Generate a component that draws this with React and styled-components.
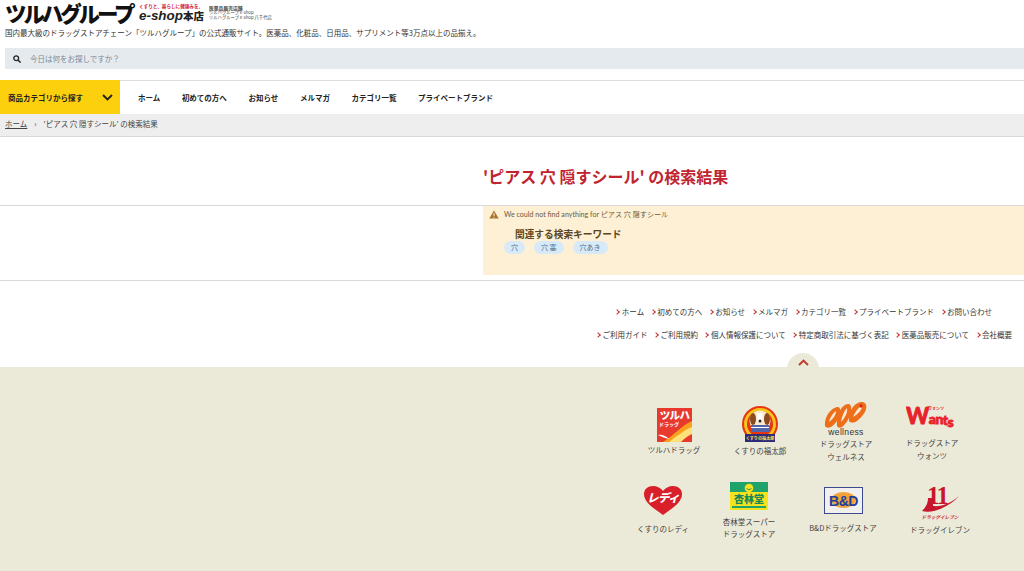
import React from 'react';
import styled, { createGlobalStyle } from 'styled-components';

const GlobalStyle = createGlobalStyle`
  html, body {
    margin: 0;
    padding: 0;
    height: 571px;
    overflow: hidden;
    background: #fff;
    font-family: "Noto Sans CJK JP", "Noto Sans", sans-serif;
    color: #333;
  }
  * { box-sizing: border-box; }
`;

const Header = styled.header`
  height: 48px;
  padding: 1px 5px 0;
`;

const LogoRow = styled.div`
  display: flex;
  align-items: flex-start;
  height: 23px;
`;

const GroupName = styled.div`
  flex: none;
  width: 134px;
  font-size: 21.5px;
  line-height: 23px;
  font-weight: 900;
  color: #111;
  letter-spacing: -3.1px;
  white-space: nowrap;
`;

const ShopName = styled.div`
  flex: none;
  width: 70px;
  display: flex;
  flex-direction: column;
`;

const Catch = styled.span`
  margin-top: 2px;
  font-size: 4.6px;
  line-height: 7px;
  font-weight: 700;
  color: #d4213a;
  white-space: nowrap;
`;

const ShopTitle = styled.span`
  font-size: 10.5px;
  line-height: 12px;
  font-weight: 900;
  color: #222;
  white-space: nowrap;
  em { font-family: "Liberation Sans", sans-serif; font-weight: 700; font-size: 13.4px; }
`;

const License = styled.div`
  flex: none;
  display: flex;
  flex-direction: column;
  padding-top: 4px;
  font-size: 4.3px;
  line-height: 5px;
  color: #444;
  white-space: nowrap;
  b { font-weight: 700; font-size: 4.8px; }
`;

const Tagline = styled.p`
  margin: 3px 0 0;
  font-size: 7.5px;
  line-height: 11px;
  color: #333;
  white-space: nowrap;
`;

const SearchBar = styled.div`
  height: 21px;
  margin: 0 0 11px 5px;
  padding-left: 8px;
  background: #e5eaef;
  display: flex;
  align-items: center;
  gap: 9px;
  font-size: 7.5px;
  color: #7d8790;
`;

const Nav = styled.nav`
  height: 34px;
  border-top: 1px solid #ddd;
  display: flex;
  align-items: stretch;
`;

const CategoryButton = styled.div`
  width: 120px;
  margin-top: -1px;
  background: #fdd00e;
  display: flex;
  align-items: center;
  justify-content: space-between;
  padding: 0 7px 0 8px;
  font-size: 7.5px;
  font-weight: 700;
  color: #222;
`;

const NavList = styled.div`
  display: flex;
  align-items: center;
  gap: 21.6px;
  padding: 0 0 1px 18px;
  font-size: 7.5px;
  font-weight: 700;
  color: #222;
`;

const Breadcrumb = styled.div`
  height: 23px;
  background: #eee;
  border-bottom: 1px solid #d8d8d8;
  padding: 0 0 4px 5px;
  display: flex;
  align-items: center;
  gap: 7px;
  font-size: 7.5px;
  color: #444;
  a { color: #444; text-decoration: underline; }
`;

const TitleBand = styled.section`
  height: 69px;
  padding: 27px 0 0 483px;
  border-bottom: 1px solid #d9d9d9;
`;

const PageTitle = styled.h1`
  margin: 0;
  font-size: 16px;
  line-height: 24px;
  font-weight: 700;
  color: #c0242f;
  white-space: pre;
`;

const ResultBand = styled.section`
  height: 75px;
  padding-left: 483px;
  border-bottom: 1px solid #d9d9d9;
`;

const Notice = styled.div`
  height: 69px;
  background: #fdf0d5;
  padding: 3px 0 0 6px;
`;

const Warning = styled.div`
  display: flex;
  align-items: center;
  gap: 5px;
  font-size: 7.1px;
  line-height: 11px;
  color: #6d5a3a;
  font-family: "Lato", "Noto Sans CJK JP", sans-serif;
`;

const KeywordTitle = styled.div`
  margin: 9px 0 0 26px;
  font-size: 9.7px;
  line-height: 11px;
  font-weight: 700;
  color: #5c4520;
`;

const Chips = styled.div`
  display: flex;
  gap: 9px;
  margin: 1px 0 0 15px;
`;

const Chip = styled.span`
  height: 13px;
  padding: 0 7px;
  border-radius: 7px;
  background: #d8eaf8;
  font-size: 7px;
  line-height: 13px;
  color: #4f6f8a;
`;

const LinkArea = styled.div`
  height: 86px;
  padding: 25px 12px 0 0;
  display: flex;
  flex-direction: column;
  align-items: flex-end;
  gap: 11px;
`;

const LinkRow = styled.div`
  display: flex;
  gap: 6.5px;
  margin-right: ${p => p.$inset || 0}px;
  font-size: 7.5px;
  line-height: 12px;
  color: #333;
`;

const FootLink = styled.span`
  display: flex;
  align-items: center;
  gap: 2.5px;
  white-space: nowrap;
  &::before {
    content: "";
    width: 3px;
    height: 3px;
    border-top: 1.3px solid #c0342f;
    border-right: 1.3px solid #c0342f;
    transform: rotate(45deg);
  }
`;

const Footer = styled.footer`
  position: relative;
  height: 204px;
  background: #ebe9d8;
  padding-top: 35px;
  display: flex;
  flex-direction: column;
  gap: 20px;
`;

const TopButton = styled.div`
  position: absolute;
  top: -14px;
  left: 787px;
  width: 32px;
  height: 16px;
  border-radius: 16px 16px 0 0;
  background: #ebe9d8;
  display: flex;
  align-items: center;
  justify-content: center;
  padding-top: 2px;
`;

const BrandRow = styled.div`
  display: flex;
  align-items: center;
  height: ${p => p.$h}px;
  padding-left: ${p => p.$left}px;
`;

const Brand = styled.div`
  width: ${p => p.$w}px;
  display: flex;
  flex-direction: column;
  align-items: center;
  gap: ${p => p.$gap}px;
`;

const BrandLabel = styled.div`
  font-size: 7.5px;
  line-height: 12.5px;
  color: #444;
  text-align: center;
  white-space: pre-line;
`;

const SearchIcon = () => (
  <svg width="8" height="8" viewBox="0 0 8 8">
    <circle cx="3.2" cy="3.2" r="2.4" fill="none" stroke="#222" strokeWidth="1.3" />
    <path d="M5 5 L7.6 7.6" stroke="#222" strokeWidth="1.5" />
  </svg>
);

const Chevron = ({ color, up }) => (
  <svg width="11" height="7" viewBox="0 0 11 7">
    <path d={up ? 'M1 6 L5.5 1.6 L10 6' : 'M1 1 L5.5 5.4 L10 1'} fill="none" stroke={color} strokeWidth="1.9" />
  </svg>
);

const WarnIcon = () => (
  <svg width="10" height="9" viewBox="0 0 10 9">
    <path d="M5 .5 L9.7 8.6 L.3 8.6 Z" fill="#a8742a" />
    <rect x="4.5" y="3" width="1" height="3" fill="#fdf0d5" />
    <rect x="4.5" y="6.7" width="1" height="1" fill="#fdf0d5" />
  </svg>
);

const TsuruhaLogo = () => (
  <svg width="35" height="34" viewBox="0 0 35 34">
    <rect width="35" height="34" fill="#e8392f" />
    <path d="M6 34 C16 28 24 18 35 13 L35 22 C28 26 24 30 20 34 Z" fill="#f9a11b" />
    <path d="M12 34 C20 28 27 22 35 19 L35 26 C30 28 27 31 24 34 Z" fill="#fde27a" />
    <path d="M1 27 C5 26 9 28 12 31 C8 30 5 29 1 27 Z" fill="#fff" />
    <text x="17.5" y="11" textAnchor="middle" fontSize="10.5" fontWeight="900" fill="#fff" letterSpacing="-.6">ツルハ</text>
    <text x="2" y="18" fontSize="5" fontWeight="700" fill="#fff">ドラッグ</text>
  </svg>
);

const FukutaroLogo = () => (
  <svg width="38" height="37" viewBox="0 0 38 37">
    <circle cx="19" cy="18" r="18" fill="#e8340f" />
    <circle cx="19" cy="18" r="14.5" fill="#e8340f" stroke="#f6c51b" strokeWidth="3" />
    <circle cx="19" cy="15" r="10.5" fill="#fbe9cf" />
    <ellipse cx="12" cy="13" rx="3" ry="6" fill="#8a4a1f" />
    <ellipse cx="26" cy="13" rx="3" ry="6" fill="#8a4a1f" />
    <path d="M16.5 7 h5 v9 h-5 Z" fill="#fff" />
    <circle cx="19" cy="15" r="1.5" fill="#222" />
    <rect x="10" y="19" width="18" height="7" fill="#5566a8" />
    <rect x="10" y="21" width="18" height="1" fill="#fff" />
    <rect x="4" y="28" width="30" height="8" fill="#2f2a78" />
    <text x="19" y="34" textAnchor="middle" fontSize="4.1" fontWeight="700" fill="#f7e25a">くすりの福太郎</text>
  </svg>
);

const WellnessLogo = () => (
  <svg width="44" height="35" viewBox="0 0 44 35">
    <path d="M1 25 C0 15 8 6 14 6 C19 7 16 20 7 26 C4 27 2 27 1 25 Z" fill="#ee6f1a" />
    <path d="M13 25 C12 14 18 2 25 3 C30 5 26 20 18 26 C16 27 14 27 13 25 Z" fill="#ee6f1a" />
    <path d="M25 20 C24 10 31 0 39 1 C45 3 43 12 33 20 C30 22 26 22 25 20 Z" fill="#ee6f1a" />
    <path d="M5 21 C6 16 9 12 12 10 C12 14 9 18 5 21 Z" fill="#fde9d4" />
    <path d="M17 21 C18 15 20 10 23 7 C24 11 21 17 17 21 Z" fill="#fde9d4" />
    <path d="M29 16 C31 11 34 7 38 4 C39 8 34 13 29 16 Z" fill="#fde9d4" />
    <circle cx="37" cy="5" r="1.7" fill="#d8261c" />
    <text x="22" y="34" textAnchor="middle" fontFamily="Liberation Sans" fontSize="8.6" fill="#333" letterSpacing=".3">wellness</text>
  </svg>
);

const WantsLogo = () => (
  <svg width="53" height="27" viewBox="0 0 53 27">
    <text x="0" y="22" fontFamily="Lato" fontWeight="900" fontSize="22" fill="#e8222a" stroke="#e8222a" strokeWidth=".8" letterSpacing="-.5">W<tspan fontSize="14" dy="0">an</tspan><tspan fontSize="14" dy="1">t</tspan><tspan fontSize="14" dy="2">s</tspan></text>
    <text x="22" y="8" fontSize="4" fontWeight="700" fill="#e8222a">ウォンツ</text>
  </svg>
);

const LadyLogo = () => (
  <svg width="38" height="29" viewBox="0 0 38 29">
    <path d="M19 29 C11 23 0 17 0 8 C0 3 4 0 9 0 C13 0 17 2 19 5 C21 2 25 0 29 0 C34 0 38 3 38 8 C38 17 27 23 19 29 Z" fill="#d81f2a" />
    <text x="19" y="16" textAnchor="middle" fontSize="11.5" fontWeight="900" fontStyle="italic" fill="#fff" letterSpacing="-.5">レディ</text>
  </svg>
);

const KyorindoLogo = () => (
  <svg width="38" height="28" viewBox="0 0 38 28">
    <rect width="38" height="28" fill="#f4e21f" />
    <rect width="38" height="10" fill="#1fa36a" />
    <circle cx="19" cy="6" r="4.3" fill="#f4e21f" />
    <path d="M16.5 6.5 Q19 9 21.5 6.5" fill="none" stroke="#1b7a50" strokeWidth=".8" />
    <text x="19" y="21" textAnchor="middle" fontSize="10" fontWeight="900" fill="#158a56">杏林堂</text>
    <rect x="2" y="24" width="34" height="2" fill="#1fa36a" />
  </svg>
);

const BDLogo = () => (
  <svg width="39" height="27" viewBox="0 0 39 27">
    <rect x=".5" y=".5" width="38" height="26" fill="#f1f0ee" stroke="#3c4a92" />
    <ellipse cx="19.5" cy="13" rx="12" ry="8" fill="#f3a33a" />
    <text x="19.5" y="19" textAnchor="middle" fontFamily="Liberation Sans" fontWeight="700" fontSize="14" fill="#1d3f9e" letterSpacing="-.5">B&amp;D</text>
  </svg>
);

const ElevenLogo = () => (
  <svg width="40" height="36" viewBox="0 0 40 36" overflow="visible">
    <text x="7" y="18" fontFamily="Liberation Serif" fontWeight="700" fontSize="25" fill="#c8162c" letterSpacing="-1.5">11</text>
    <path d="M8 12 C8 18 5 22 2 25 C14 28 30 20 39 10 C31 17 22 21 13 20 C13 17 13 15 13 12 Z" fill="#c8162c" />
    <text x="20" y="33" textAnchor="middle" fontSize="4.6" fontWeight="700" fontStyle="italic" fill="#c8162c">ドラッグイレブン</text>
  </svg>
);

const navItems = ['ホーム', '初めての方へ', 'お知らせ', 'メルマガ', 'カテゴリ一覧', 'プライベートブランド'];
const links1 = ['ホーム', '初めての方へ', 'お知らせ', 'メルマガ', 'カテゴリ一覧', 'プライベートブランド', 'お問い合わせ'];
const links2 = ['ご利用ガイド', 'ご利用規約', '個人情報保護について', '特定商取引法に基づく表記', '医薬品販売について', '会社概要'];

const App = () => (
  <>
    <GlobalStyle />
    <Header>
      <LogoRow>
        <GroupName>ツルハグループ</GroupName>
        <ShopName>
          <Catch>くすりと、暮らしに健康みを。</Catch>
          <ShopTitle><em><i>e-shop</i></em>本店</ShopTitle>
        </ShopName>
        <License>
          <b>医薬品販売店舗</b>
          <span>ツルハグループ e-shop</span>
          <span>ツルハグループ e-shop 八千代店</span>
        </License>
      </LogoRow>
      <Tagline>国内最大級のドラッグストアチェーン「ツルハグループ」の公式通販サイト。医薬品、化粧品、日用品、サプリメント等3万点以上の品揃え。</Tagline>
    </Header>
    <SearchBar>
      <SearchIcon />
      <span>今日は何をお探しですか？</span>
    </SearchBar>
    <Nav>
      <CategoryButton>
        <span>商品カテゴリから探す</span>
        <Chevron color="#222" />
      </CategoryButton>
      <NavList>
        {navItems.map(item => <span key={item}>{item}</span>)}
      </NavList>
    </Nav>
    <Breadcrumb>
      <a>ホーム</a>
      <span>›</span>
      <span>'ピアス 穴 隠すシール' の検索結果</span>
    </Breadcrumb>
    <TitleBand>
      <PageTitle>'ピアス 穴 隠すシール' の検索結果</PageTitle>
    </TitleBand>
    <ResultBand>
      <Notice>
        <Warning>
          <WarnIcon />
          <span>We could not find anything for ピアス 穴 隠すシール</span>
        </Warning>
        <KeywordTitle>関連する検索キーワード</KeywordTitle>
        <Chips>
          <Chip>穴</Chip>
          <Chip>穴 塞</Chip>
          <Chip>穴あき</Chip>
        </Chips>
      </Notice>
    </ResultBand>
    <LinkArea>
      <LinkRow $inset={20}>{links1.map(l => <FootLink key={l}>{l}</FootLink>)}</LinkRow>
      <LinkRow>{links2.map(l => <FootLink key={l}>{l}</FootLink>)}</LinkRow>
    </LinkArea>
    <Footer>
      <TopButton><Chevron color="#c0392b" up /></TopButton>
      <BrandRow $h={60} $left={631}>
        <Brand $w={86} $gap={2}>
          <TsuruhaLogo />
          <BrandLabel>ツルハドラッグ</BrandLabel>
        </Brand>
        <Brand $w={86} $gap={2}>
          <FukutaroLogo />
          <BrandLabel>くすりの福太郎</BrandLabel>
        </Brand>
        <Brand $w={86} $gap={2}>
          <WellnessLogo />
          <BrandLabel>{'ドラッグストア\nウェルネス'}</BrandLabel>
        </Brand>
        <Brand $w={86} $gap={8}>
          <WantsLogo />
          <BrandLabel>{'ドラッグストア\nウォンツ'}</BrandLabel>
        </Brand>
      </BrandRow>
      <BrandRow $h={58} $left={620}>
        <Brand $w={86} $gap={8}>
          <LadyLogo />
          <BrandLabel>くすりのレディ</BrandLabel>
        </Brand>
        <Brand $w={86} $gap={6}>
          <KyorindoLogo />
          <BrandLabel>{'杏林堂スーパー\nドラッグストア'}</BrandLabel>
        </Brand>
        <Brand $w={102} $gap={8}>
          <BDLogo />
          <BrandLabel>B&amp;Dドラッグストア</BrandLabel>
        </Brand>
        <Brand $w={92} $gap={2}>
          <ElevenLogo />
          <BrandLabel>ドラッグイレブン</BrandLabel>
        </Brand>
      </BrandRow>
    </Footer>
  </>
);

export default App;
